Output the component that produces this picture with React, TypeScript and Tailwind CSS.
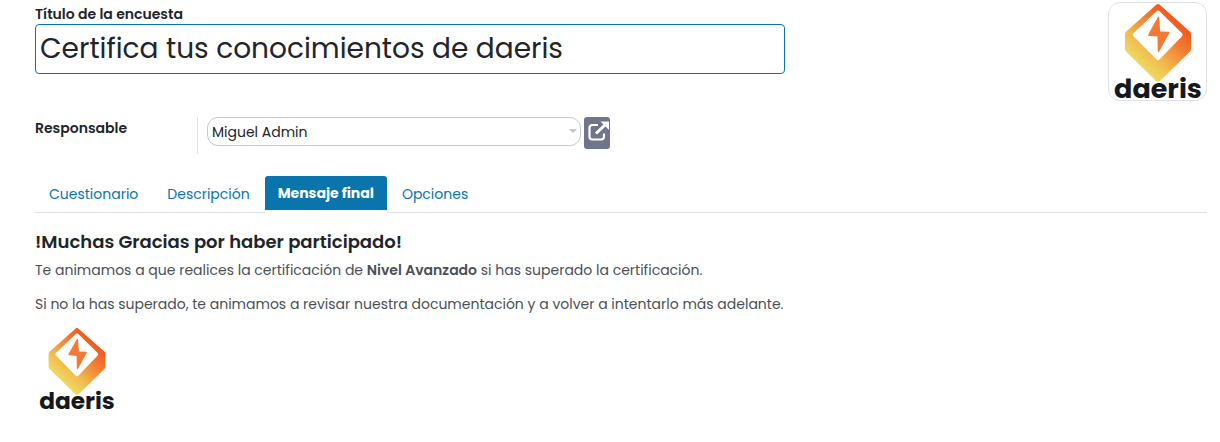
import { useId, useState } from 'react';

const tabs = ['Cuestionario', 'Descripción', 'Mensaje final', 'Opciones'];

function DaerisLogo({ className }: { className: string }) {
  const id = useId();
  return (
    <svg viewBox="0 0 88 108" className={className} role="img" aria-label="daeris">
      <defs>
        <linearGradient id={id} gradientUnits="userSpaceOnUse" x1="24" y1="66" x2="68" y2="18">
          <stop offset="0" stopColor="#efe069" />
          <stop offset="0.3" stopColor="#f1bd4e" />
          <stop offset="0.65" stopColor="#f28233" />
          <stop offset="1" stopColor="#f1531b" />
        </linearGradient>
      </defs>
      <path
        d="M42.5 1.6Q44 .2 45.500 1.600L76.300 29Q77 30 77 31V46Q77 47.500 76 48.500L46.500 77.500Q44 80 41.500 77.500L12 48.500Q11 47.500 11 46V31Q11 30 11.700 29Z"
        fill={`url(#${id})`}
      />
      <path
        d="M42.500 8.200Q44 6.800 45.500 8.200L68 30.200Q69.500 31.700 68 33.200L45.500 56.500Q44 58 42.500 56.500L19.500 33.200Q18 31.700 19.500 30.200Z"
        fill="#fff"
      />
      <path
        d="M43.800 14.200L34.300 31.200Q33.500 32.800 35.200 32.900L43.500 33.600L43.800 48.300Q44.200 50 45.300 48.300L55.200 30.200Q55.800 28.800 54.300 28.800L46.200 28.500L45.200 14.300Q44.800 13 43.800 14.200Z"
        fill="#f27a35"
      />
      <text
        x="44"
        y="95"
        textAnchor="middle"
        fill="#16181c"
        className="font-[Poppins,Inter,sans-serif] text-[27px] font-bold"
      >
        daeris
      </text>
    </svg>
  );
}

function ExternalLinkIcon() {
  return (
    <svg viewBox="0 0 24 24" className="size-6" fill="none" stroke="#fff" aria-hidden="true">
      <path d="M13 5H7.500Q4.500 5 4.500 8V16.500Q4.500 19.500 7.500 19.500H16Q19 19.500 19 16.500V13.500" strokeWidth="2.200" />
      <path d="M11 13.500L20.500 4.500" strokeWidth="3" />
      <path d="M15.500 1.500H24V10Z" fill="#fff" stroke="none" />
    </svg>
  );
}

export default function App() {
  const [active, setActive] = useState('Mensaje final');
  return (
    <main className="bg-white pr-[13px] pl-[35px] font-[Poppins,Inter,sans-serif] text-sm text-[#212529]">
      <header className="flex items-start justify-between pt-[2px]">
        <div className="w-[64%] pt-[2px]">
          <label htmlFor="title" className="block leading-5 font-semibold">
            Título de la encuesta
          </label>
          <input
            id="title"
            defaultValue="Certifica tus conocimientos de daeris"
            className="block h-[50px] w-full rounded border border-[#0a74ac] px-1 text-[28px] outline-none"
          />
        </div>
        <div className="flex size-[99px] justify-center rounded-xl border border-[#dee2e6]">
          <DaerisLogo className="h-[108px] w-[88px] shrink-0" />
        </div>
      </header>

      <div className="mt-4 flex h-[37px] w-full max-w-[575px] items-start">
        <label htmlFor="owner" className="w-[162px] leading-[22px] font-semibold">
          Responsable
        </label>
        <div className="flex flex-1 items-start gap-[3px] self-stretch border-l border-[#dee2e6] pl-[9px]">
          <div className="relative flex-1">
            <select
              id="owner"
              className="h-[29px] w-full appearance-none rounded-[11px] border border-[#c8c8c8] bg-white px-1 text-sm"
            >
              <option>Miguel Admin</option>
            </select>
            <svg viewBox="0 0 8 4" className="pointer-events-none absolute top-3 right-1 h-1 w-2" aria-hidden="true">
              <path d="M0 0H8L4 4Z" fill="#c4c4c4" />
            </svg>
          </div>
          <button
            type="button"
            aria-label="Abrir responsable"
            className="flex h-8 w-[26px] justify-center rounded-[3px] bg-[#71758b] pt-[3px]"
          >
            <ExternalLinkIcon />
          </button>
        </div>
      </div>

      <div role="tablist" className="mt-[22px] flex h-[37px] items-start gap-px border-b border-[#dee2e6]">
        {tabs.map((tab) => (
          <button
            key={tab}
            type="button"
            role="tab"
            aria-selected={tab === active}
            onClick={() => setActive(tab)}
            className={
              tab === active
                ? 'h-[37px] bg-white'
                : 'h-9 px-[14px] text-[#0a74ac]'
            }
          >
            {tab === active ? (
              <span className="mb-[3px] block rounded-t-[3px] bg-[#0a74ac] px-[13px] leading-[34px] font-bold text-white">
                {tab}
              </span>
            ) : (
              tab
            )}
          </button>
        ))}
      </div>

      <section className="pt-4 text-[#495057]">
        <h2 className="text-lg leading-[26px] font-semibold text-[#212529]">!Muchas Gracias por haber participado!</h2>
        <p className="mt-1 leading-[22px]">
          Te animamos a que realices la certificación de <strong className="font-semibold">Nivel Avanzado</strong> si
          has superado la certificación.
        </p>
        <p className="mt-3 leading-[22px]">
          Si no la has superado, te animamos a revisar nuestra documentación y a volver a intentarlo más adelante.
        </p>
        <DaerisLogo className="mt-3 ml-1 h-[93px] w-[76px]" />
      </section>
    </main>
  );
}
